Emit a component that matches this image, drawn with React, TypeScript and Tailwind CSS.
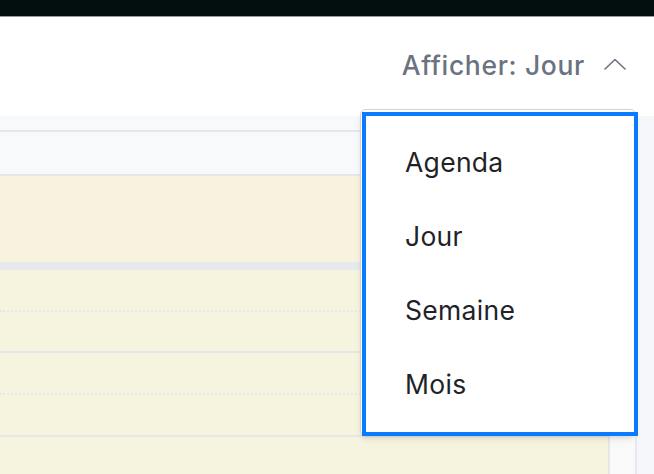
import { useState } from "react"

const views = ["Agenda", "Jour", "Semaine", "Mois"]

function ChevronUp() {
  return (
    <svg width="22" height="12" viewBox="0 0 22 12" fill="none" className="text-[#6b7280]">
      <path d="M1 11 L11 1.5 L21 11" stroke="currentColor" strokeWidth="1.6" strokeLinecap="round" strokeLinejoin="round" />
    </svg>
  )
}

function Slot({ dotted }: { dotted?: boolean }) {
  return (
    <div className="flex h-full flex-col">
      <div className={`flex-1 ${dotted ? "border-b-2 border-dotted border-[#e4e7ee]" : ""}`} />
      <div className="flex-1" />
    </div>
  )
}

export default function App() {
  const [view] = useState("Jour")

  return (
    <div className="relative h-[474px] w-[654px] overflow-hidden bg-white font-['Inter',sans-serif]">
      <div className="h-[16px] bg-[#020f0e]" />
      <div className="h-[1px] bg-[#9a9a9a]" />

      <header className="flex h-[99px] items-center justify-end pr-[28px] pb-[2px]">
        <span className="text-[26.5px] font-medium tracking-[0.65px] text-[#6b7280]">Afficher: {view}</span>
        <span className="ml-[19px] mt-[-4px]">
          <ChevronUp />
        </span>
      </header>

      <div className="flex h-[358px] bg-[#f8f9fb]">
        <div className="flex w-[610px] shrink-0 flex-col border-r-2 border-[#e5e7eb] pt-[14px]">
          <div className="h-[46px] shrink-0 border-y-2 border-[#e3e6ec] bg-[#f8f9fb]" />
          <div className="h-[86px] shrink-0 bg-[#f8f3de]" />
          <div className="h-[8px] shrink-0 bg-[#e6e9ee]" />
          <div className="flex flex-col bg-[#f6f4de]">
            <div className="h-[83px] shrink-0 border-b-2 border-[#e6e7ec]">
              <Slot dotted />
            </div>
            <div className="h-[84px] shrink-0 border-b-2 border-[#e6e7ec]">
              <Slot dotted />
            </div>
            <div className="h-[60px] shrink-0" />
          </div>
        </div>
        <div className="w-[27px] shrink-0 border-r-2 border-[#e8e9ed] bg-[#f9f9f9]" />
        <div className="flex-1 bg-[#f6f7fa]" />
      </div>

      {/* view picker menu */}
      <div className="absolute left-[360px] top-[109px] h-[327px] w-[276px] rounded-md border border-[#d2d2d2] bg-white shadow-md" />
      <ul className="absolute left-[362px] top-[112px] h-[324px] w-[276px] border-4 border-[#0a7aff] bg-white pl-[39px] pt-[9px]">
        {views.map((v) => (
          <li key={v} className="h-[74px] text-[26.5px] leading-[74px] tracking-[0.3px] text-[#1f2328]">
            {v}
          </li>
        ))}
      </ul>
    </div>
  )
}
